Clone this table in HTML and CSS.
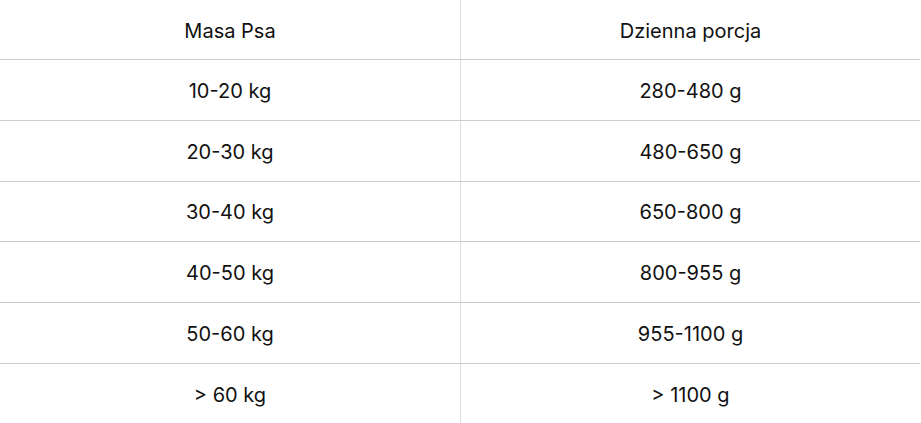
FILE: index.html
```html
<!DOCTYPE html>
<html lang="pl">
<head>
<meta charset="utf-8">
<link rel="stylesheet" href="styles.css">
</head>
<body>
<div class="table">
  <div class="row head">
    <div class="cell">Masa Psa</div>
    <div class="cell">Dzienna porcja</div>
  </div>
  <div class="row">
    <div class="cell">10-20 kg</div>
    <div class="cell">280-480 g</div>
  </div>
  <div class="row">
    <div class="cell">20-30 kg</div>
    <div class="cell">480-650 g</div>
  </div>
  <div class="row">
    <div class="cell">30-40 kg</div>
    <div class="cell">650-800 g</div>
  </div>
  <div class="row">
    <div class="cell">40-50 kg</div>
    <div class="cell">800-955 g</div>
  </div>
  <div class="row">
    <div class="cell">50-60 kg</div>
    <div class="cell">955-1100 g</div>
  </div>
  <div class="row last">
    <div class="cell">&gt; 60 kg</div>
    <div class="cell">&gt; 1100 g</div>
  </div>
</div>
</body>
</html>
```
FILE: styles.css
```css
html, body {
  margin: 0;
  padding: 0;
  background: #ffffff;
}
body {
  font-family: Inter, "Noto Sans", sans-serif;
  font-size: 20px;
  color: #111111;
}
.table {
  width: 920px;
}
.row {
  display: grid;
  grid-template-columns: 460px 460px;
  height: 60.8px;
  box-sizing: border-box;
  border-bottom: 1px solid #cccccc;
}
.row.head {
  height: 60px;
}
.row.last {
  border-bottom: none;
}
.cell {
  display: flex;
  align-items: center;
  justify-content: center;
  padding-top: 2px;
}
.cell + .cell {
  border-left: 1px solid #dddddd;
}
```
